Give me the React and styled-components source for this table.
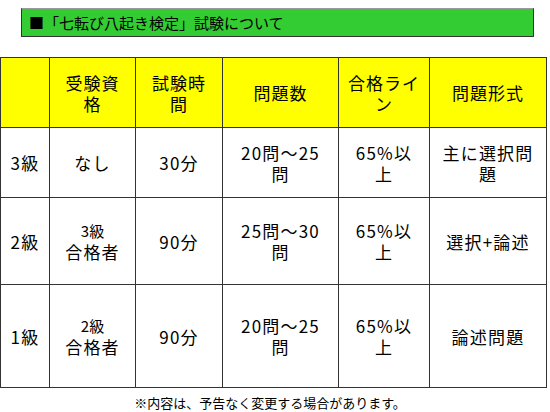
import React from 'react'
import styled, {createGlobalStyle} from 'styled-components'

const GlobalStyle = createGlobalStyle`
  html, body {
    margin: 0;
    padding: 0;
    background: #ffffff;
  }
  body {
    width: 550px;
    height: 412px;
    overflow: hidden;
    font-family: "Noto Sans CJK JP", "Noto Sans", sans-serif;
    color: #000;
  }
`

const Page = styled.div`
  display: flex;
  flex-direction: column;
  padding-top: 8px;
`

const TitleBar = styled.div`
  display: flex;
  align-items: center;
  box-sizing: border-box;
  width: 513px;
  height: 29px;
  margin-left: 21px;
  padding-left: 7px;
  background: #33cc33;
  border: 1px solid #333;
  border-top-color: #9a9a9a;
  font-size: 15px;
  line-height: 1;
`

const Table = styled.table`
  margin-top: 20px;
  width: 546px;
  table-layout: fixed;
  border-collapse: collapse;
`

const Row = styled.tr`
  height: ${props => props.h}px;
`

const HeadCell = styled.th`
  background: #ffff00;
  border: 1px solid #333;
  font-weight: normal;
  font-size: 17px;
  letter-spacing: 1px;
  line-height: 21px;
  text-align: center;
  vertical-align: middle;
  white-space: pre-line;
  padding: 0;
`

const Cell = styled.td`
  background: #ffffff;
  border: 1px solid #333;
  font-size: 17px;
  letter-spacing: 1.2px;
  line-height: 21px;
  text-align: center;
  vertical-align: middle;
  white-space: pre-line;
  padding: 0;
`

const Small = styled.span`
  display: block;
  font-size: 15px;
  line-height: 20px;
  letter-spacing: 0;
`

const Note = styled.div`
  margin-top: 7px;
  padding-right: 10px;
  text-align: center;
  font-size: 13px;
  line-height: 15px;
  letter-spacing: 0;
`

const widths = [49, 86, 87, 116, 91, 117]

const headers = ['', '受験資\n格', '試験時\n間', '問題数', '合格ライ\nン', '問題形式']

const rows = [
  {h: 70, level: '3級', req: null, time: '30分', count: '20問～25\n問', line: '65%以\n上', format: '主に選択問\n題'},
  {h: 87, level: '2級', req: '3級', time: '90分', count: '25問～30\n問', line: '65%以\n上', format: '選択+論述'},
  {h: 103, level: '1級', req: '2級', time: '90分', count: '20問～25\n問', line: '65%以\n上', format: '論述問題'},
]

export default function App () {
  return (
    <Page>
      <GlobalStyle />
      <TitleBar>■「七転び八起き検定」試験について</TitleBar>
      <Table>
        <colgroup>
          {widths.map((w, i) => <col key={i} style={{width: w}} />)}
        </colgroup>
        <thead>
          <Row h={70}>
            {headers.map((text, i) => <HeadCell key={i}>{text}</HeadCell>)}
          </Row>
        </thead>
        <tbody>
          {rows.map(row => (
            <Row key={row.level} h={row.h}>
              <Cell>{row.level}</Cell>
              <Cell>
                {row.req ? (<><Small>{row.req}</Small>合格者</>) : 'なし'}
              </Cell>
              <Cell>{row.time}</Cell>
              <Cell>{row.count}</Cell>
              <Cell>{row.line}</Cell>
              <Cell>{row.format}</Cell>
            </Row>
          ))}
        </tbody>
      </Table>
      <Note>※内容は、予告なく変更する場合があります。</Note>
    </Page>
  )
}
